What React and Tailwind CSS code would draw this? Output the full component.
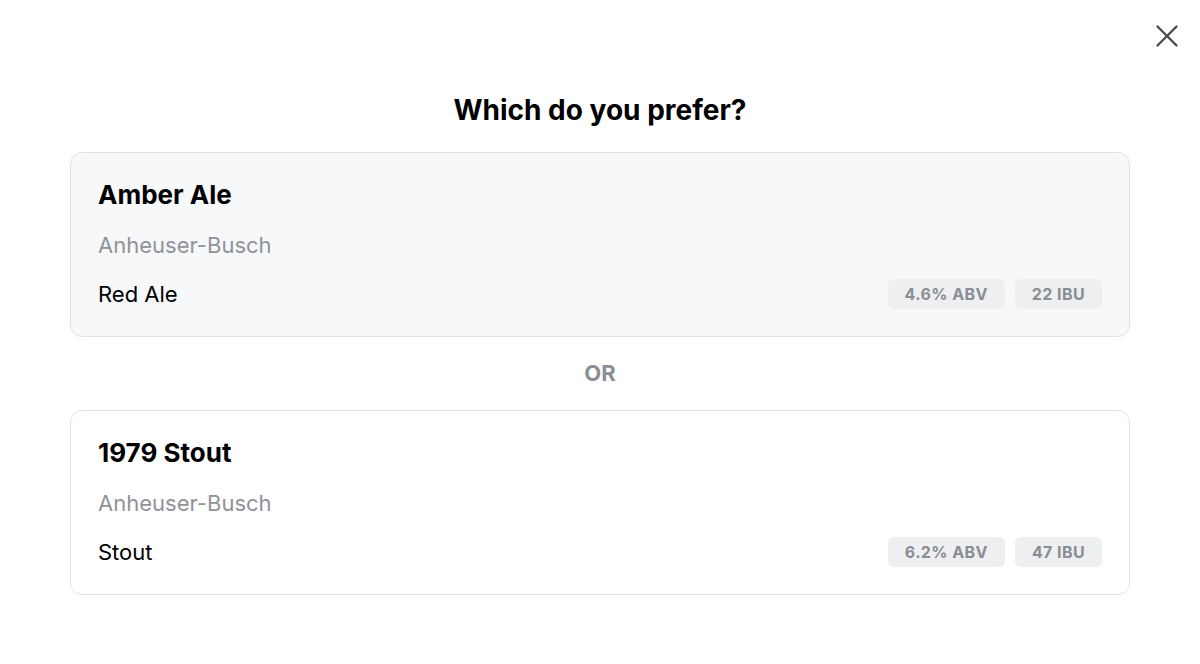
import { X } from "lucide-react";

const beers = [
  { name: "Amber Ale", brewery: "Anheuser-Busch", style: "Red Ale", abv: "4.6", ibu: 22, tinted: true },
  { name: "1979 Stout", brewery: "Anheuser-Busch", style: "Stout", abv: "6.2", ibu: 47, tinted: false },
];

const Stat = ({ children }) => (
  <span className="h-[30px] px-[17px] flex items-center rounded-md bg-[#eeeff1] text-base font-bold tracking-wide text-[#8a8d94]">
    {children}
  </span>
);

const BeerCard = ({ beer }) => (
  <button
    className={
      "w-full text-left rounded-xl border border-[#dfe1e5] px-[27px] pt-[26px] pb-[27px] " +
      (beer.tinted ? "bg-[#f7f8fa]" : "bg-white")
    }
  >
    <div className="text-[26px] leading-8 font-bold text-black">{beer.name}</div>
    <div className="mt-5 text-[22px] leading-7 text-[#909398]">{beer.brewery}</div>
    <div className="mt-5 flex items-center h-[30px]">
      <span className="text-[22px] text-black">{beer.style}</span>
      <div className="ml-auto flex gap-2.5">
        <Stat>{beer.abv}% ABV</Stat>
        <Stat>{beer.ibu} IBU</Stat>
      </div>
    </div>
  </button>
);

export default function App() {
  return (
    <div className="relative w-[1200px] h-[664px] bg-white font-['Inter',sans-serif]">
      <button className="absolute top-[17px] right-[14px] text-[#4a4a4a]">
        <X size={38} strokeWidth={1.5} />
      </button>
      <div className="w-[1060px] mx-auto pt-[92px]">
        <h1 className="text-[28px] leading-9 font-bold text-center text-black">Which do you prefer?</h1>
        <div className="mt-6 flex flex-col">
          <BeerCard beer={beers[0]} />
          <div className="h-[73px] flex items-center justify-center text-[22px] font-bold text-[#8b8e93]">OR</div>
          <BeerCard beer={beers[1]} />
        </div>
      </div>
    </div>
  );
}
